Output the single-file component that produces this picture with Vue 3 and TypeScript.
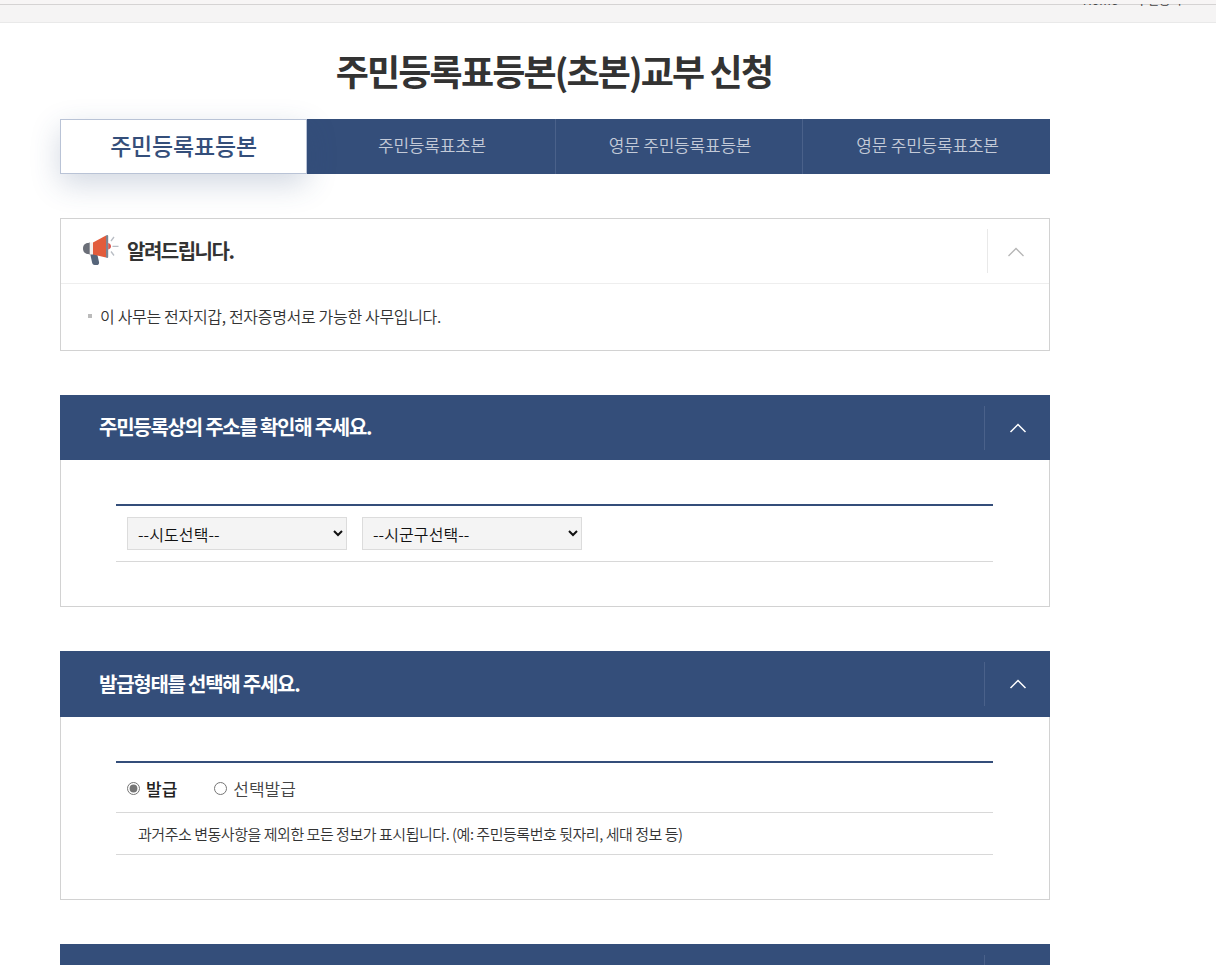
<script setup lang="ts">
import { ref } from 'vue'

const tabs: string[] = ['주민등록표등본', '주민등록표초본', '영문 주민등록표등본', '영문 주민등록표초본']
const issue = ref<string>('full')
</script>

<template>
  <div class="page">
    <div class="topbar">
      <div class="crumb">Home &nbsp;&gt;&nbsp; 주민등록</div>
    </div>
    <main class="wrap">
      <h1 class="title">주민등록표등본(초본)교부 신청</h1>
      <div class="tabs">
        <div v-for="(t, i) in tabs" :key="t" class="tab" :class="{ active: i === 0 }">{{ t }}</div>
      </div>

      <section class="notice">
        <header class="notice-head">
          <svg class="horn" width="36" height="32" viewBox="0 0 36 32">
            <path d="M7 18h7l2 9c.4 1.700-.7 3-2.300 3h-2c-1.300 0-2.200-.8-2.500-2z" fill="#56657a" />
            <path d="M5 8h2v11H5C2 19 0 16.700 0 13.500S2 8 5 8z" fill="#6b6f78" />
            <rect x="6" y="7.500" width="4" height="12" fill="#f4f0ee" />
            <rect x="5.800" y="7.500" width=".9" height="12" fill="#6b6f78" />
            <path d="M10 7.500 23 .5v22l-13-3z" fill="#e25c3c" />
            <rect x="23" y="0" width="2.200" height="23" rx="1" fill="#7b8593" />
            <path d="M25.200 8c1.800.4 2.800 1.700 2.800 3.300s-1 2.900-2.800 3.300z" fill="#d9574f" />
            <path d="M28 6l3-4M29.500 11.300H35.500M28 16.500l3 4" stroke="#b9bdc4" stroke-width="1.300" fill="none" />
          </svg>
          <h2 class="notice-title">알려드립니다.</h2>
          <div class="toggle light">
            <svg width="18" height="10" viewBox="0 0 18 10"><path d="M1.500 9 9 1.500 16.500 9" fill="none" stroke="#b5b5b5" stroke-width="1.300" /></svg>
          </div>
        </header>
        <div class="notice-body">
          <span class="bullet"></span>
          <span>이 사무는 전자지갑, 전자증명서로 가능한 사무입니다.</span>
        </div>
      </section>

      <section class="panel">
        <header class="panel-head">
          <h2>주민등록상의 주소를 확인해 주세요.</h2>
          <div class="toggle">
            <svg width="18" height="10" viewBox="0 0 18 10"><path d="M1.500 9 9 1.500 16.500 9" fill="none" stroke="#fff" stroke-width="1.500" /></svg>
          </div>
        </header>
        <div class="panel-body">
          <div class="rule-top select-row">
            <select class="sel"><option>--시도선택--</option></select>
            <select class="sel"><option>--시군구선택--</option></select>
          </div>
        </div>
      </section>

      <section class="panel">
        <header class="panel-head tall">
          <h2>발급형태를 선택해 주세요.</h2>
          <div class="toggle">
            <svg width="18" height="10" viewBox="0 0 18 10"><path d="M1.500 9 9 1.500 16.500 9" fill="none" stroke="#fff" stroke-width="1.500" /></svg>
          </div>
        </header>
        <div class="panel-body">
          <div class="rule-top radio-row">
            <label class="radio" :class="{ on: issue === 'full' }">
              <input v-model="issue" type="radio" name="issue" value="full" />발급
            </label>
            <label class="radio" :class="{ on: issue === 'select' }">
              <input v-model="issue" type="radio" name="issue" value="select" />선택발급
            </label>
          </div>
          <p class="desc">과거주소 변동사항을 제외한 모든 정보가 표시됩니다. (예: 주민등록번호 뒷자리, 세대 정보 등)</p>
        </div>
      </section>

      <section class="panel">
        <header class="panel-head">
          <h2></h2>
          <div class="toggle"></div>
        </header>
      </section>
    </main>
  </div>
</template>

<style>
html, body { margin: 0; background: #fff; }
</style>

<style scoped>
.page {
  height: 965px;
  overflow: hidden;
  font-family: "Noto Sans CJK KR", "Noto Sans", sans-serif;
  color: #333;
  background: #fff;
}
.topbar {
  height: 18px;
  box-sizing: content-box;
  position: relative;
  overflow: hidden;
  background: #f5f4f4;
  border-top: 4px solid #f7f5f5;
  border-bottom: 1px solid #e9e9e9;
  box-shadow: inset 0 1px 0 #d5d3d3;
}
.crumb {
  position: absolute;
  right: 34px;
  top: -14px;
  font-size: 12.500px;
  line-height: 20px;
  color: #444;
}
.wrap {
  width: 990px;
  margin-left: 60px;
}
.title {
  margin: 21px 0 0;
  padding-right: 2px;
  box-sizing: border-box;
  height: 52px;
  line-height: 52px;
  font-size: 36px;
  font-weight: 700;
  letter-spacing: -1.850px;
  text-align: center;
  color: #333;
}
.tabs {
  display: grid;
  grid-template-columns: 247px 248px 247px 248px;
  height: 55px;
  margin-top: 23px;
  background: #344e7a;
}
.tab {
  display: flex;
  align-items: center;
  justify-content: center;
  box-sizing: border-box;
  padding: 0 0 4px 2px;
  font-size: 17px;
  font-weight: 350;
  color: #c3cad8;
  letter-spacing: -0.2px;
  border-left: 1px solid #4a618a;
}
.tab:nth-child(2) { border-left: 0; }
.tab.active {
  padding: 0 0 3px;
  font-size: 23px;
  font-weight: 500;
  letter-spacing: -0.2px;
  color: #344e7a;
  background: #fff;
  border: 1px solid #b9c3d6;
  box-shadow: 0 10px 30px rgba(52, 78, 122, .22);
  position: relative;
}
.notice {
  margin-top: 44px;
  border: 1px solid #d2d2d2;
  box-sizing: border-box;
  height: 133px;
}
.notice-head {
  display: flex;
  align-items: center;
  height: 64px;
  padding-left: 22px;
  border-bottom: 1px solid #eee;
  position: relative;
}
.horn { flex: none; }
.notice-title {
  margin: 0 0 2px 8px;
  font-size: 20px;
  font-weight: 700;
  letter-spacing: -1.500px;
  color: #333;
}
.toggle {
  margin-left: auto;
  width: 66px;
  height: 44px;
  flex: none;
  box-sizing: border-box;
  border-left: 1px solid #4a618a;
  display: flex;
  align-items: center;
  justify-content: center;
}
.toggle.light {
  width: 62px;
  padding: 2px 6px 0 0;
  border-left-color: #e9e9e9;
}
.notice-body {
  display: flex;
  align-items: center;
  height: 66px;
  padding-left: 27px;
  padding-bottom: 2px;
  box-sizing: border-box;
  font-size: 16px;
  font-weight: 350;
  letter-spacing: -0.320px;
  color: #333;
}
.bullet {
  width: 4px;
  height: 4px;
  margin-right: 8px;
  background: #bbb;
}
.panel {
  margin-top: 44px;
}
.panel-head {
  display: flex;
  align-items: center;
  height: 65px;
  background: #344e7a;
  padding-left: 39px;
}
.panel-head.tall { height: 66px; }
.panel-head h2 {
  margin: 0 0 2px;
  font-size: 20px;
  font-weight: 700;
  letter-spacing: -1.250px;
  color: #fff;
}
.panel-body {
  box-sizing: border-box;
  border: 1px solid #d2d2d2;
  border-top: 0;
  padding: 44px 56px 44px 55px;
}
.rule-top {
  border-top: 2px solid #344e7a;
  border-bottom: 1px solid #d8d8d8;
}
.select-row {
  display: flex;
  gap: 15px;
  padding: 11px;
}
.sel {
  width: 220px;
  height: 33px;
  box-sizing: border-box;
  padding: 1px 6px 0;
  font-family: inherit;
  font-size: 16px;
  font-weight: 350;
  letter-spacing: 0.100px;
  color: #111;
  background: #f4f4f4;
  border: 1px solid #dcdcdc;
  border-radius: 0;
}
.radio-row {
  display: flex;
  gap: 37px;
  align-items: center;
  box-sizing: content-box;
  height: 48px;
  padding: 1px 0 0 11px;
}
.radio {
  display: flex;
  align-items: center;
  font-size: 17px;
  font-weight: 350;
  color: #444;
}
.radio.on { color: #222; font-weight: 500; }
.radio input {
  width: 13px;
  height: 13px;
  margin: 0 6px 0 0;
  accent-color: #757575;
}
.desc {
  margin: 0;
  height: 41px;
  display: flex;
  align-items: center;
  padding-left: 22px;
  font-size: 15px;
  font-weight: 350;
  letter-spacing: -0.470px;
  color: #333;
  border-bottom: 1px solid #d8d8d8;
}
</style>
